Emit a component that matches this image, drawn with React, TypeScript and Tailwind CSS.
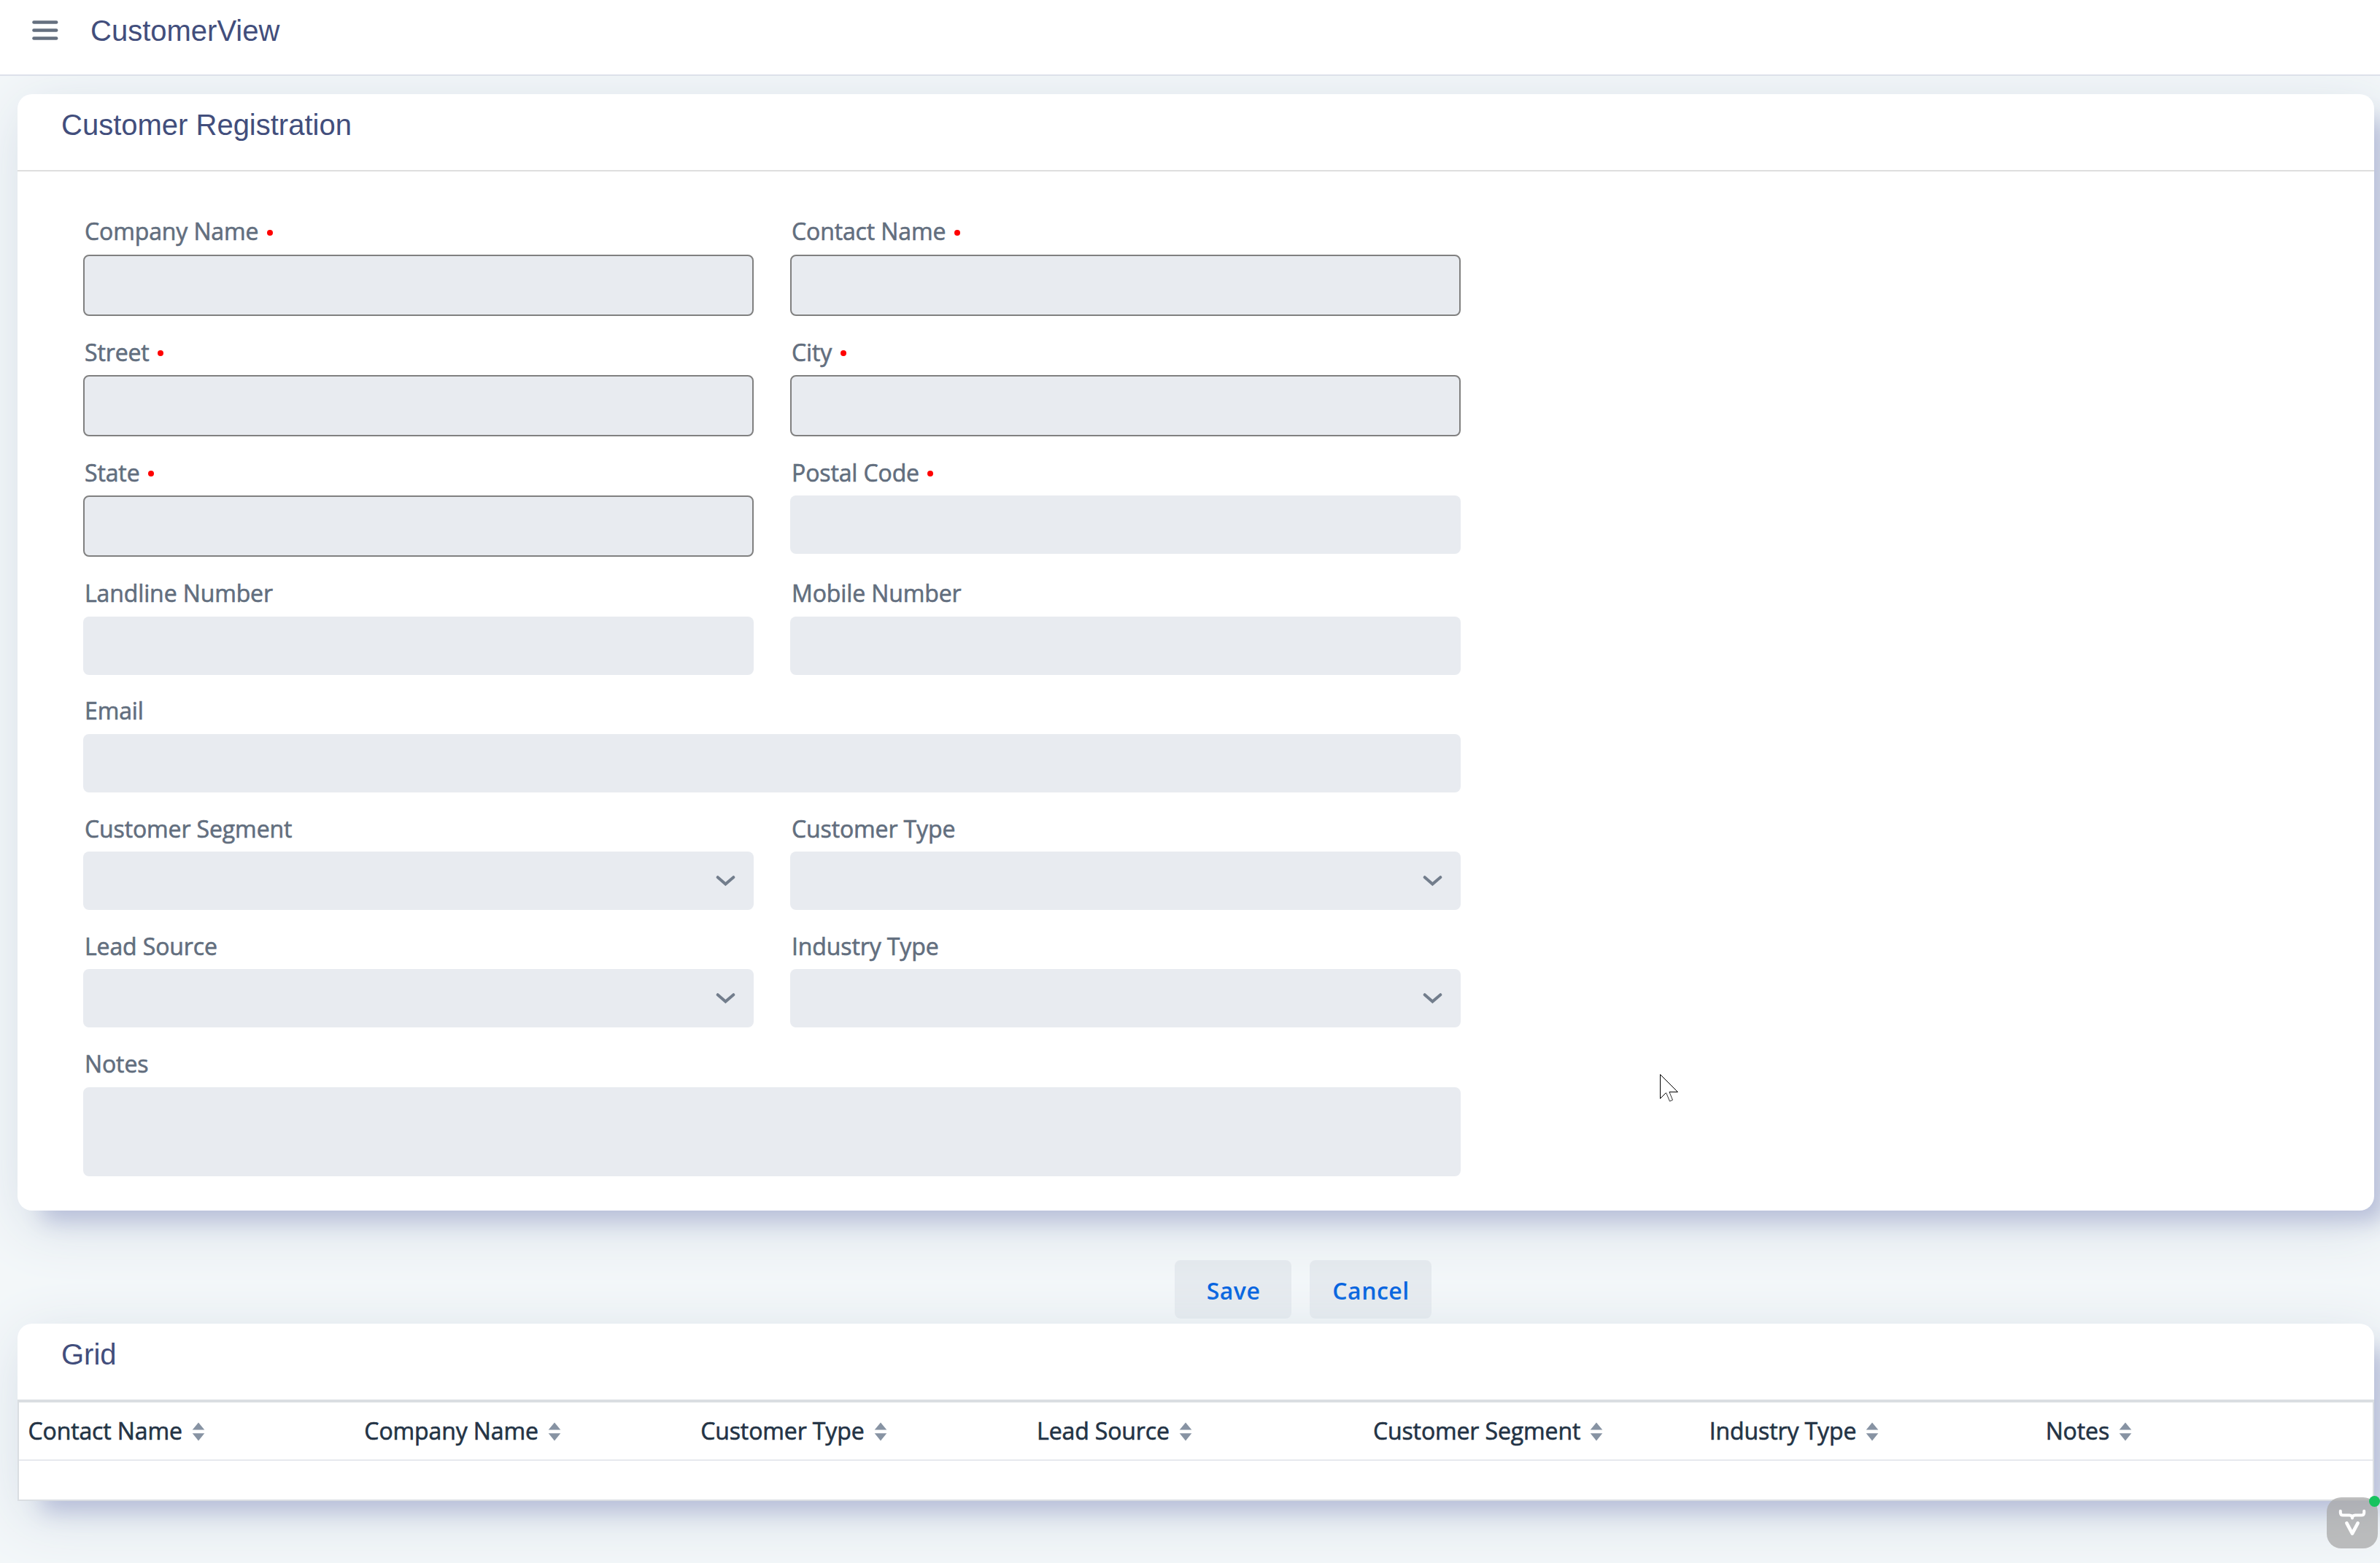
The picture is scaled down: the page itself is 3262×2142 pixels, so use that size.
/**
 * CustomerView
 *
 * Registration form on top, customer grid below.
 */
import type { ReactNode } from "react";

type FieldProps = {
  label: string;
  required?: boolean;
  outlined?: boolean;
  select?: boolean;
  wide?: boolean;
  tall?: boolean;
};

const FIELDS: FieldProps[] = [
  { label: "Company Name", required: true, outlined: true },
  { label: "Contact Name", required: true, outlined: true },
  { label: "Street", required: true, outlined: true },
  { label: "City", required: true, outlined: true },
  { label: "State", required: true, outlined: true },
  { label: "Postal Code", required: true },
  { label: "Landline Number" },
  { label: "Mobile Number" },
  { label: "Email", wide: true },
  { label: "Customer Segment", select: true },
  { label: "Customer Type", select: true },
  { label: "Lead Source", select: true },
  { label: "Industry Type", select: true },
  { label: "Notes", wide: true, tall: true },
];

const COLUMNS = [
  "Contact Name",
  "Company Name",
  "Customer Type",
  "Lead Source",
  "Customer Segment",
  "Industry Type",
  "Notes",
];

function MenuIcon() {
  return (
    <svg width="36" height="28" viewBox="0 0 36 28" fill="#65707f">
      <rect x="0.2" y="0.2" width="35.2" height="4.6" rx="2.2" />
      <rect x="0.2" y="11.2" width="35.2" height="4.6" rx="2.2" />
      <rect x="0.2" y="22.2" width="35.2" height="4.6" rx="2.2" />
    </svg>
  );
}

function Chevron() {
  return (
    <svg width="28" height="16" viewBox="0 0 28 16" fill="none" stroke="#727d8c" strokeWidth="4" strokeLinecap="round">
      <path d="M2.7 3.2 L13.4 12.6 L24.3 3.2" />
    </svg>
  );
}

function Sorter() {
  return (
    <svg width="18" height="26" viewBox="0 0 18 26" fill="#8793a3">
      <path d="M9 0.4 L17.3 10.4 H0.7 Z" />
      <path d="M9 25.6 L17.3 15.2 H0.7 Z" />
    </svg>
  );
}

function Field({ label, required, outlined, select, wide, tall }: FieldProps) {
  return (
    <div className={wide ? "col-span-2" : ""}>
      <div className="flex h-[49.33px] items-start pl-0.5 text-[32px] leading-[35px] font-medium tracking-[-0.12px] text-[#626e7e] [-webkit-text-stroke:0.6px_#626e7e]">
        {label}
        {required && <span className="mt-[15.5px] ml-[11.5px] size-2 rounded-full bg-[#ff0000]" />}
      </div>
      <div
        className={
          "flex items-center justify-end rounded-lg bg-[#e8ebf0] pr-6 " +
          (outlined ? "h-[84px] border-2 border-[#808080]" : tall ? "h-[122px]" : "h-20")
        }
      >
        {select && <Chevron />}
      </div>
    </div>
  );
}

function Card({ title, className, children }: { title: string; className: string; children: ReactNode }) {
  return (
    <section
      className={
        "bg-white shadow-[24px_24px_30px_-11px_rgb(183,190,217),8px_20px_80px_0px_rgb(211,219,229)] " + className
      }
    >
      <h3 className="h-[104px] px-[60px] pt-[19px] font-['Liberation_Sans',sans-serif] text-[40px] leading-[46px] text-[#424e7c]">
        {title}
      </h3>
      {children}
    </section>
  );
}

export default function App() {
  return (
    <div className="relative flex h-[2142px] w-[3262px] flex-col overflow-hidden bg-[#f3f7f9] font-['Open_Sans','Noto_Sans',sans-serif]">
      <header className="relative z-10 flex h-[104px] shrink-0 items-start border-b-2 border-[#dde1ea] bg-white pl-11">
        <div className="mt-7">
          <MenuIcon />
        </div>
        <h2 className="mt-[19px] ml-11 font-['Liberation_Sans',sans-serif] text-[40px] leading-[46px] text-[#424e7c]">
          CustomerView
        </h2>
      </header>

      <main className="flex flex-col pt-[25px] pr-2 pl-6">
        <Card title="Customer Registration" className="h-[1530px] rounded-[20px]">
          <div className="border-t-2 border-[#dedede] px-[90px] pt-[64.4px]">
            <div className="grid w-[1888px] grid-cols-2 gap-x-[50px] gap-y-[31.95px]">
              {FIELDS.map((f) => (
                <Field key={f.label} {...f} />
              ))}
            </div>
          </div>
        </Card>

        <div className="flex h-[155px] gap-[25px] pt-[68px] pl-[1586px] text-[32px] leading-[80px] font-semibold tracking-[0.5px] text-[#0062df]">
          <button className="h-20 w-40 rounded-lg bg-[#1a3850]/6 pt-px pl-px leading-[81px]">Save</button>
          <button className="h-20 w-[167px] rounded-lg bg-[#1a3850]/6 pt-px pl-px leading-[81px]">Cancel</button>
        </div>

        <Card title="Grid" className="rounded-t-[20px]">
          <div className="h-[139px] border-2 border-t-4 border-[#dadee2]">
            <div className="grid h-20 grid-cols-7 border-b-2 border-[#e6e9ee]">
              {COLUMNS.map((c) => (
                <div key={c} className="flex items-start gap-[13px] pt-[17px] pl-[12.5px]">
                  <span className="mt-px text-[32px] leading-[42px] font-medium tracking-[-0.12px] text-[#233345] [-webkit-text-stroke:0.6px_#233345]">
                    {c}
                  </span>
                  <span className="mt-[10px]">
                    <Sorter />
                  </span>
                </div>
              ))}
            </div>
          </div>
        </Card>
      </main>

      {/* dev tools badge */}
      <div className="absolute top-[2052px] left-[3189px] size-[70px] rounded-[20px] bg-[#a8a8a8]/75">
        <svg width="70" height="70" viewBox="0 0 70 70" fill="none" stroke="#fff" strokeLinecap="round" strokeLinejoin="round">
          <path
            strokeWidth="4"
            d="M18.8 18.8 V21 Q18.8 24.5 22.3 24.5 H31 Q35 24.5 35 28.6 Q35 24.5 39 24.5 H47.7 Q51.2 24.5 51.2 21 V18.8"
          />
          <path strokeWidth="4.6" d="M27.4 35.3 L35 49.6 L42.6 35.3" />
        </svg>
      </div>
      <span className="absolute top-[2050px] left-[3247px] size-[15px] rounded-full bg-[#17c35f]" />

      {/* mouse pointer */}
      <svg className="absolute top-[1471px] left-[2274px]" width="28" height="40" viewBox="0 0 28 40" fill="#fff" stroke="#000">
        <path d="M14 25.5 L18.5 36.5 L14.5 38.2 L9.8 27" stroke="#333" />
        <path d="M9.5 26.5 L1.5 34.5 V1.5 L25.5 25.5 H13.8" />
      </svg>
    </div>
  );
}
